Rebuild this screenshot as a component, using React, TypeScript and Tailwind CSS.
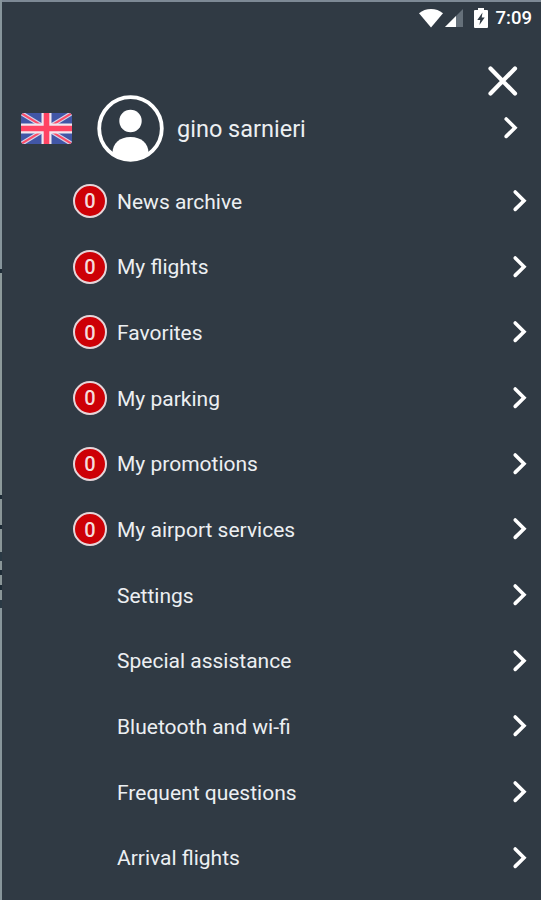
import clsx from 'clsx';

type MenuItem = {
  label: string;
  count?: number;
};

const menuItems: MenuItem[] = [
  { label: 'News archive', count: 0 },
  { label: 'My flights', count: 0 },
  { label: 'Favorites', count: 0 },
  { label: 'My parking', count: 0 },
  { label: 'My promotions', count: 0 },
  { label: 'My airport services', count: 0 },
  { label: 'Settings' },
  { label: 'Special assistance' },
  { label: 'Bluetooth and wi-fi' },
  { label: 'Frequent questions' },
  { label: 'Arrival flights' },
];

// Sliver of the page that stays visible behind the drawer
const pageEdge = [
  { height: 269, color: 'bg-[#87959c]' },
  { height: 4, color: 'bg-[#1d2b36]' },
  { height: 222, color: 'bg-[#8d9a9b]' },
  { height: 4, color: 'bg-[#1d2b36]' },
  { height: 26, color: 'bg-[#8a9698]' },
  { height: 4, color: 'bg-[#1d2b36]' },
  { height: 23, color: 'bg-[#8a9698]' },
  { height: 9, color: 'bg-[#2a3944]' },
  { height: 9, color: 'bg-[#8a9698]' },
  { height: 5, color: 'bg-[#1d2b36]' },
  { height: 10, color: 'bg-[#8a9698]' },
  { height: 5, color: 'bg-[#1d2b36]' },
  { height: 10, color: 'bg-[#8a9698]' },
  { height: 8, color: 'bg-[#2a3944]' },
  { height: 292, color: 'bg-[#88969b]' },
];

const Chevron = () => (
  <svg className="h-6 w-4 shrink-0" viewBox="0 0 16 24" fill="none" stroke="#fff" strokeWidth="3.6">
    <path d="M3.2 3 12 11.7 3.2 20.4" strokeLinecap="round" />
  </svg>
);

const StatusBar = () => (
  <div className="flex h-8 shrink-0 items-center justify-end pr-[9px]">
    <svg className="h-[19px] w-6" viewBox="0 0 24 19" fill="#fff">
      <path d="M0 4.2C3.4 1.5 7.5 0 12 0s8.6 1.5 12 4.2L12 18.5z" />
    </svg>
    <svg className="ml-0.5 h-[19px] w-[19px]" viewBox="0 0 19 19">
      <path d="M0 18 18 0v18z" fill="#65707a" />
      <path d="M0 18 11 7v11z" fill="#fff" />
    </svg>
    <svg className="ml-2.5 h-5 w-[14px]" viewBox="0 0 14 20">
      <path d="M4 0h6v2H13a1 1 0 0 1 1 1v16a1 1 0 0 1-1 1H1a1 1 0 0 1-1-1V3a1 1 0 0 1 1-1h3z" fill="#fff" />
      <path d="M8.5 4.5 3.3 12h3l-.9 5L10.7 9.5h-3z" fill="#2f3a44" />
    </svg>
    <span className="ml-2 text-[18.5px] leading-6 font-medium">7:09</span>
  </div>
);

const FlagUK = () => (
  <svg className="h-[31px] w-[51px]" viewBox="0 0 51 31">
    <defs>
      <clipPath id="flag">
        <rect width="51" height="31" rx="3.5" />
      </clipPath>
    </defs>
    <g clipPath="url(#flag)">
      <rect width="51" height="31" fill="#4156a6" />
      <path d="M0 0 51 31M51 0 0 31" stroke="#d5d3e8" strokeWidth="4.4" />
      <path d="M0 0 51 31M51 0 0 31" stroke="#fb4b68" strokeWidth="2" />
      <path d="M25.5 0v31M0 15.5h51" stroke="#f1e7ef" strokeWidth="10" />
      <path d="M25.5 0v31M0 15.5h51" stroke="#ff4363" strokeWidth="5.6" />
    </g>
  </svg>
);

const Avatar = () => (
  <svg className="h-[67px] w-[67px]" viewBox="0 0 67 67">
    <defs>
      <clipPath id="avatar">
        <circle cx="33.5" cy="33.5" r="32" />
      </clipPath>
    </defs>
    <g clipPath="url(#avatar)" fill="#fff">
      <circle cx="33.5" cy="26" r="11.2" />
      <path d="M15.5 67V58C15.5 48.5 22.5 42 33.5 42S51.5 48.5 51.5 58v9z" />
    </g>
    <circle cx="33.5" cy="33.5" r="31.3" fill="none" stroke="#fff" strokeWidth="3.8" />
  </svg>
);

const MenuRow = ({ label, count }: MenuItem) => (
  <button className="flex h-[65.7px] w-full shrink-0 items-center pr-[13px] pl-[71px] text-left">
    <span
      className={clsx(
        'flex h-[34px] w-[34px] items-center justify-center rounded-full pt-px text-[20px] leading-none font-medium',
        count !== undefined && 'border-2 border-[#e6d5d9] bg-[#cd0006] text-[#f5dcdc]'
      )}
    >
      {count}
    </span>
    <span className="ml-[10px] flex-1 pt-[3px] text-[21px] text-[#eceff2]">{label}</span>
    <Chevron />
  </button>
);

export default function App() {
  return (
    <div className="flex h-[900px] w-[541px] overflow-hidden bg-[#303a44] font-['Roboto',sans-serif] text-white">
      <div className="flex w-[2px] shrink-0 flex-col">
        {pageEdge.map((part, i) => (
          <div key={i} className={part.color} style={{ height: part.height }} />
        ))}
      </div>

      <div className="flex min-w-0 flex-1 flex-col border-t-2 border-[#7d8995]">
        <StatusBar />

        <div className="flex h-[60px] shrink-0 items-start justify-end pt-8 pr-[23px]">
          <svg className="h-[30px] w-[31px]" viewBox="0 0 31 30" fill="none" stroke="#fff" strokeWidth="4.2">
            <path d="M3.5 2.5 28 27.5M28 2.5 3.5 27.5" strokeLinecap="round" />
          </svg>
        </div>

        <div className="flex h-[68px] shrink-0 items-center pr-[22px] pl-[19px]">
          <FlagUK />
          <div className="ml-[25px]">
            <Avatar />
          </div>
          <span className="ml-[13px] flex-1 pt-1 text-[23.5px] text-[#eceff2]">gino sarnieri</span>
          <Chevron />
        </div>

        <nav className="flex flex-col pt-[6px]">
          {menuItems.map((item) => (
            <MenuRow key={item.label} {...item} />
          ))}
        </nav>
      </div>
    </div>
  );
}
